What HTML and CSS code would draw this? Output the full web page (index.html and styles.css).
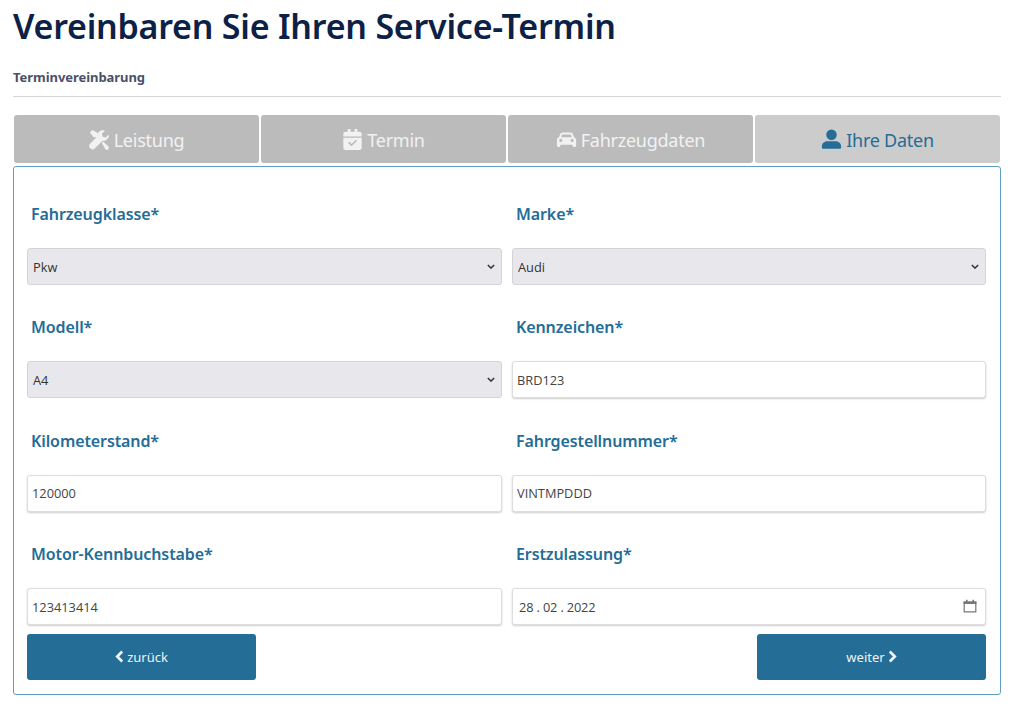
FILE: index.html
```html
<!DOCTYPE html>
<html lang="de">
<head>
<meta charset="utf-8">
<title>Service-Termin</title>
<link rel="stylesheet" href="styles.css">
</head>
<body>
<main class="page">
  <h1 class="title">Vereinbaren Sie Ihren Service-Termin</h1>
  <h2 class="subtitle">Terminvereinbarung</h2>
  <hr class="rule">
  <nav class="tabs">
    <div class="tab">
      <svg class="tab-icon" viewBox="0 0 24 24"><path fill="currentColor" d="M3.600 1 1 3.600l4.300 5.700h2.900l3.700 3.700 1.900-1.900-3.700-3.700V4.500L3.600 1z"/><path fill="currentColor" d="M22.600 6.300l-3.500 3.500-3.500-.9-.9-3.500L18.200 1.900c-2.500-.9-5.300-.3-7 1.500-1.200 1.300-1.600 3-1.200 4.700L1.500 16.600a3.800 3.800 0 0 0 5.400 5.400l8.500-8.500c1.700.4 3.400 0 4.700-1.200 1.800-1.700 3.400-3.500 2.500-6z"/><path fill="currentColor" d="M14.500 15.800 16 14.300l6.300 5.700a2.400 2.400 0 0 1-3.400 3.300l-4.400-7.500z"/></svg>
      <span>Leistung</span>
    </div>
    <div class="tab">
      <svg class="tab-icon" viewBox="0 0 24 24"><path fill="currentColor" fill-rule="evenodd" d="M6.500 0h3.200v3h4.600V0h3.200v3h2.500A2.500 2.500 0 0 1 22.500 5.500V8.500h-21V5.500A2.500 2.500 0 0 1 4 3h2.500V0zM1.500 10h21v11.500A2.500 2.500 0 0 1 20 24H4a2.500 2.500 0 0 1-2.500-2.500V10zm15.700 3.500-6.300 6.300-3.900-3.800 1.300-1.300 2.600 2.500 5-5 1.300 1.300z"/></svg>
      <span>Termin</span>
    </div>
    <div class="tab">
      <svg class="tab-icon" viewBox="0 0 24 24"><path fill="currentColor" fill-rule="evenodd" d="M7.500 4h9c1.300 0 2.400.8 2.800 2l1.300 3.500c1.300.4 2.400 1.700 2.400 3.200V19a1.500 1.500 0 0 1-1.500 1.500h-1A1.500 1.500 0 0 1 19 19v-1H5v1a1.500 1.500 0 0 1-1.500 1.500h-1A1.500 1.500 0 0 1 1 19v-6.300c0-1.500 1-2.800 2.400-3.200L4.700 6c.4-1.200 1.500-2 2.800-2zm-.8 2.900-.8 2.400h12.200l-.8-2.400a1 1 0 0 0-.9-.6H7.600a1 1 0 0 0-.9.600zM5.500 11.200a1.800 1.800 0 1 0 0 3.600 1.800 1.800 0 0 0 0-3.600zm13 0a1.800 1.800 0 1 0 0 3.600 1.800 1.800 0 0 0 0-3.600z"/></svg>
      <span>Fahrzeugdaten</span>
    </div>
    <div class="tab tab-active">
      <svg class="tab-icon" viewBox="0 0 24 24"><path fill="currentColor" d="M12 .5a6 6 0 1 1 0 12 6 6 0 0 1 0-12zM7 14h10c3.300 0 6 2.700 6 6v1a1.500 1.500 0 0 1-1.500 1.500h-19A1.500 1.500 0 0 1 1 21v-1c0-3.300 2.700-6 6-6z"/></svg>
      <span>Ihre Daten</span>
    </div>
  </nav>
  <form class="card">
    <div class="grid">
      <div class="field">
        <label class="label">Fahrzeugklasse*</label>
        <select class="control control-select"><option>Pkw</option></select>
      </div>
      <div class="field">
        <label class="label">Marke*</label>
        <select class="control control-select"><option>Audi</option></select>
      </div>
      <div class="field">
        <label class="label">Modell*</label>
        <select class="control control-select"><option>A4</option></select>
      </div>
      <div class="field">
        <label class="label">Kennzeichen*</label>
        <input class="control" type="text" value="BRD123">
      </div>
      <div class="field">
        <label class="label">Kilometerstand*</label>
        <input class="control" type="text" value="120000">
      </div>
      <div class="field">
        <label class="label">Fahrgestellnummer*</label>
        <input class="control" type="text" value="VINTMPDDD">
      </div>
      <div class="field">
        <label class="label">Motor-Kennbuchstabe*</label>
        <input class="control" type="text" value="123413414">
      </div>
      <div class="field">
        <label class="label">Erstzulassung*</label>
        <div class="date-wrap">
          <input class="control control-date" type="text" value="28 . 02 . 2022">
          <svg class="date-icon" viewBox="0 0 14 14"><path fill="none" stroke="currentColor" stroke-width="1.200" d="M1.200 3.200h11.600v9.600H1.200z"/><path fill="currentColor" d="M.6 2.600h12.800v2.400H.6zM3 .8h1.600v2H3zM9.400.8H11v2H9.400z"/></svg>
        </div>
      </div>
    </div>
    <div class="actions">
      <button class="btn" type="button">
        <svg class="chev" viewBox="0 0 10 14"><path fill="none" stroke="currentColor" stroke-width="3" d="M8 1.500 2.500 7 8 12.500"/></svg>
        <span>zurück</span>
      </button>
      <button class="btn" type="button">
        <span>weiter</span>
        <svg class="chev" viewBox="0 0 10 14"><path fill="none" stroke="currentColor" stroke-width="3" d="M2 1.500 7.500 7 2 12.500"/></svg>
      </button>
    </div>
  </form>
</main>
</body>
</html>
```
FILE: styles.css
```css
* { box-sizing: border-box; }
html, body { margin: 0; background: #fff; }
body { font-family: "Noto Sans", "Open Sans", sans-serif; }
.page { padding: 0 23px 0 13px; }
.title {
  margin: 0;
  padding-top: 4px;
  height: 64px;
  font-size: 34px;
  line-height: 44px;
  font-weight: 600;
  color: #0d2146;
  letter-spacing: -0.23px;
  white-space: nowrap;
}
.subtitle {
  margin: 0;
  height: 32px;
  font-size: 13px;
  line-height: 27px;
  font-weight: 700;
  color: #4a5068;
  letter-spacing: -0.05px;
}
.rule { margin: 0 0 18px; border: 0; border-top: 1px solid #d6d6d6; }
.tabs {
  display: grid;
  grid-template-columns: repeat(4, 245px);
  gap: 2px;
  padding-left: 1px;
  margin-bottom: 3px;
}
.tab {
  height: 48px;
  padding-top: 2px;
  display: flex;
  align-items: center;
  justify-content: center;
  gap: 4px;
  background: #bbb;
  border-radius: 3px;
  color: #f2f2f2;
  font-size: 18px;
  letter-spacing: -0.25px;
}
.tab-active { background: #ccc; color: #236d97; }
.tab-icon { width: 21px; height: 21px; flex: none; margin-top: -2px; }
.card {
  height: 529px;
  padding: 0 14px 0 13px;
  border: 1px solid #5c9fc4;
  border-radius: 3px;
}
.grid {
  display: grid;
  grid-template-columns: 475px 474px;
  column-gap: 10px;
  grid-auto-rows: 113.400px;
  padding-top: 33px;
}
.field { display: flex; flex-direction: column; }
.label {
  height: 48px;
  padding-left: 4px;
  font-size: 16px;
  line-height: 28px;
  font-weight: 600;
  color: #236d97;
  letter-spacing: -0.1px;
}
.control {
  display: block;
  width: 100%;
  height: 37px;
  padding: 0 4px;
  font-family: "Open Sans", sans-serif;
  font-size: 12.800px;
  color: #444;
  background: #fff;
  border: 1px solid #ddd;
  border-radius: 3px;
  box-shadow: 0 1px 2px rgba(0, 0, 0, 0.2);
  outline: none;
}
.control-select {
  appearance: none;
  padding: 0 20px 0 5px;
  color: #333;
  background: #e8e8ec url("data:image/svg+xml,%3Csvg xmlns='http://www.w3.org/2000/svg' viewBox='0 0 10 6'%3E%3Cpath fill='none' stroke='%23333' stroke-width='1.800' d='M1 1l4 4 4-4'/%3E%3C/svg%3E") no-repeat right 6px center / 8px 5px;
  box-shadow: none;
  border-color: #d4d4d8;
}
.control-date { padding-left: 6px; letter-spacing: -0.15px; }
.date-wrap { position: relative; }
.date-icon {
  position: absolute;
  right: 9px;
  top: 11px;
  width: 14px;
  height: 14px;
  color: #777;
}
.actions {
  display: flex;
  justify-content: space-between;
  margin-top: -19.600px;
}
.btn {
  width: 229px;
  height: 46px;
  display: flex;
  align-items: center;
  justify-content: center;
  gap: 3px;
  border: 0;
  border-radius: 3px;
  background: #236d97;
  color: #eef4f8;
  font-family: "Noto Sans", sans-serif;
  font-size: 13px;
}
.chev { width: 9px; height: 13px; flex: none; }
```
